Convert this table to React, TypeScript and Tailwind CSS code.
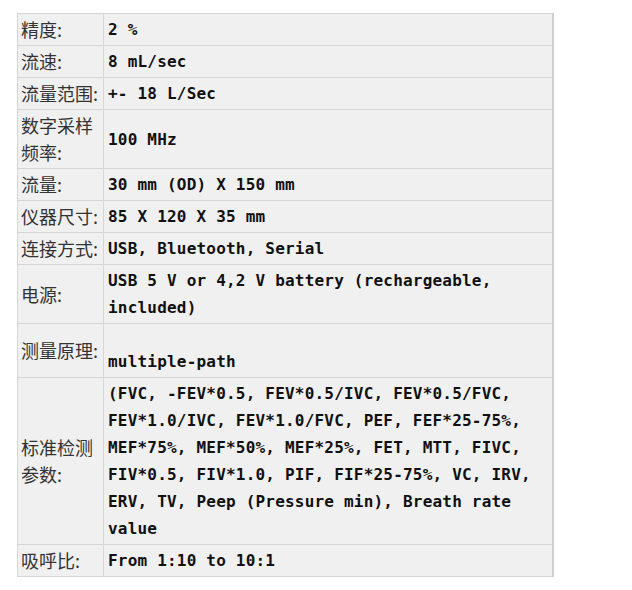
const LABEL = "font-['Noto_Sans_CJK_SC',sans-serif] text-[18px] leading-[27px] text-[#333]"
const VALUE =
  "font-['DejaVu_Sans_Mono',monospace] font-bold text-[16px] leading-[27px] tracking-[0.2px] text-[#111] whitespace-pre"

type Row = { label: string[]; value: string[]; valueClass?: string }

const rows: Row[] = [
  { label: ["精度:"], value: ["2 %"] },
  { label: ["流速:"], value: ["8 mL/sec"] },
  { label: ["流量范围:"], value: ["+- 18 L/Sec"] },
  { label: ["数字采样", "频率:"], value: ["100 MHz"] },
  { label: ["流量:"], value: ["30 mm (OD) X 150 mm"] },
  { label: ["仪器尺寸:"], value: ["85 X 120 X 35 mm"] },
  { label: ["连接方式:"], value: ["USB, Bluetooth, Serial"] },
  {
    label: ["电源:"],
    value: ["USB 5 V or 4,2 V battery (rechargeable,", "included)"],
  },
  { label: ["测量原理:"], value: ["multiple-path"], valueClass: "pt-[24px] pb-[2px]" },
  {
    label: ["标准检测", "参数:"],
    value: [
      "(FVC, -FEV*0.5, FEV*0.5/IVC, FEV*0.5/FVC,",
      "FEV*1.0/IVC, FEV*1.0/FVC, PEF, FEF*25-75%,",
      "MEF*75%, MEF*50%, MEF*25%, FET, MTT, FIVC,",
      "FIV*0.5, FIV*1.0, PIF, FIF*25-75%, VC, IRV,",
      "ERV, TV, Peep (Pressure min), Breath rate",
      "value",
    ],
  },
  { label: ["吸呼比:"], value: ["From 1:10 to 10:1"] },
]

export default function App() {
  return (
    <div className="w-[632px] h-[590px] bg-white pt-[13px] pl-[17px]">
      <table className="w-[537px] border-collapse bg-[#f0f0f0] border-r-2 border-r-[#cfcfcf]">
        <tbody>
          {rows.map((row, i) => (
            <tr key={i} className="border-y border-[#d6d6d6]">
              <td className="w-[86px] align-middle pl-[3px] pr-0 py-[2px] border-l border-r border-[#d6d6d6]">
                <div className={LABEL}>
                  {row.label.map((l, j) => (
                    <div key={j}>{l}</div>
                  ))}
                </div>
              </td>
              <td className={`align-middle pl-[4px] ${row.valueClass ?? "py-[2px]"}`}>
                <div className={VALUE}>
                  {row.value.map((v, j) => (
                    <div key={j}>{v}</div>
                  ))}
                </div>
              </td>
            </tr>
          ))}
        </tbody>
      </table>
    </div>
  )
}
